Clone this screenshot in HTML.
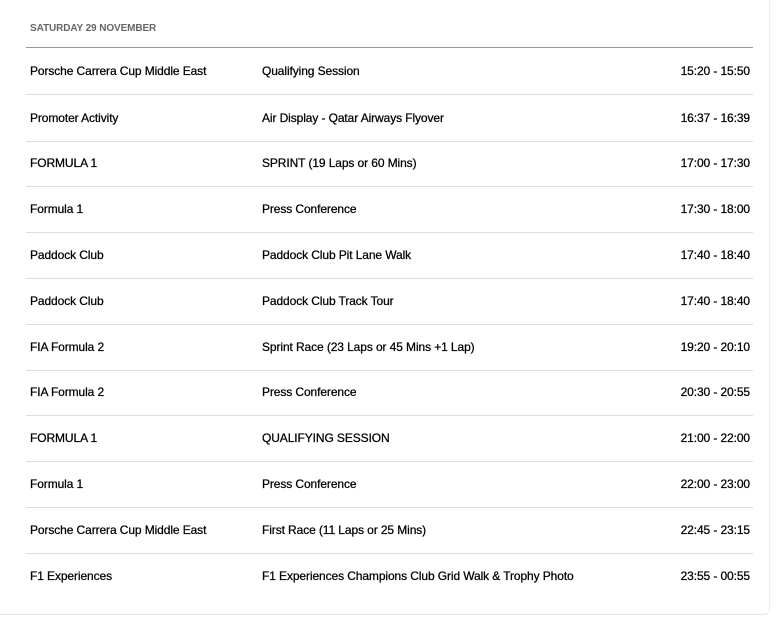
<!DOCTYPE html>
<html><head><meta charset="utf-8"><style>
html,body{margin:0;padding:0;background:#fff;}
body{width:777px;height:618px;position:relative;overflow:hidden;font-family:"Liberation Sans",sans-serif;}
.card{position:absolute;left:0;top:0;width:769px;height:614px;border-right:1px solid #eee;border-bottom:1px solid #e6e6e6;border-radius:0 0 6px 0;}
.hdr{position:absolute;left:30px;top:23px;font-size:10px;font-weight:bold;color:#666;letter-spacing:-0.1px;}
.hl{position:absolute;left:26px;width:727px;top:47px;height:1px;background:#999;}
.row{position:absolute;left:26px;width:727px;height:46px;border-bottom:1px solid #ddd;font-size:12px;color:#000;-webkit-text-stroke:0.25px #000;letter-spacing:-0.1px;}
.row span{position:absolute;top:50%;transform:translateY(-50%);white-space:nowrap;}
.a{left:4px}.b{left:236px}.c{right:3px}
</style></head><body>
<div class="card"></div>
<div class="hdr">SATURDAY 29 NOVEMBER</div>
<div class="hl"></div>
<div class="row" style="top:48px"><span class="a">Porsche Carrera Cup Middle East</span><span class="b">Qualifying Session</span><span class="c">15:20 - 15:50</span></div>
<div class="row" style="top:95px"><span class="a">Promoter Activity</span><span class="b">Air Display - Qatar Airways Flyover</span><span class="c">16:37 - 16:39</span></div>
<div class="row" style="top:140px"><span class="a">FORMULA 1</span><span class="b">SPRINT (19 Laps or 60 Mins)</span><span class="c">17:00 - 17:30</span></div>
<div class="row" style="top:186px"><span class="a">Formula 1</span><span class="b">Press Conference</span><span class="c">17:30 - 18:00</span></div>
<div class="row" style="top:232px"><span class="a">Paddock Club</span><span class="b">Paddock Club Pit Lane Walk</span><span class="c">17:40 - 18:40</span></div>
<div class="row" style="top:278px"><span class="a">Paddock Club</span><span class="b">Paddock Club Track Tour</span><span class="c">17:40 - 18:40</span></div>
<div class="row" style="top:324px"><span class="a">FIA Formula 2</span><span class="b">Sprint Race (23 Laps or 45 Mins +1 Lap)</span><span class="c">19:20 - 20:10</span></div>
<div class="row" style="top:369px"><span class="a">FIA Formula 2</span><span class="b">Press Conference</span><span class="c">20:30 - 20:55</span></div>
<div class="row" style="top:415px"><span class="a">FORMULA 1</span><span class="b">QUALIFYING SESSION</span><span class="c">21:00 - 22:00</span></div>
<div class="row" style="top:461px"><span class="a">Formula 1</span><span class="b">Press Conference</span><span class="c">22:00 - 23:00</span></div>
<div class="row" style="top:507px"><span class="a">Porsche Carrera Cup Middle East</span><span class="b">First Race (11 Laps or 25 Mins)</span><span class="c">22:45 - 23:15</span></div>
<div class="row" style="top:553px;border-bottom:none"><span class="a">F1 Experiences</span><span class="b">F1 Experiences Champions Club Grid Walk &amp; Trophy Photo</span><span class="c">23:55 - 00:55</span></div>
</body></html>
